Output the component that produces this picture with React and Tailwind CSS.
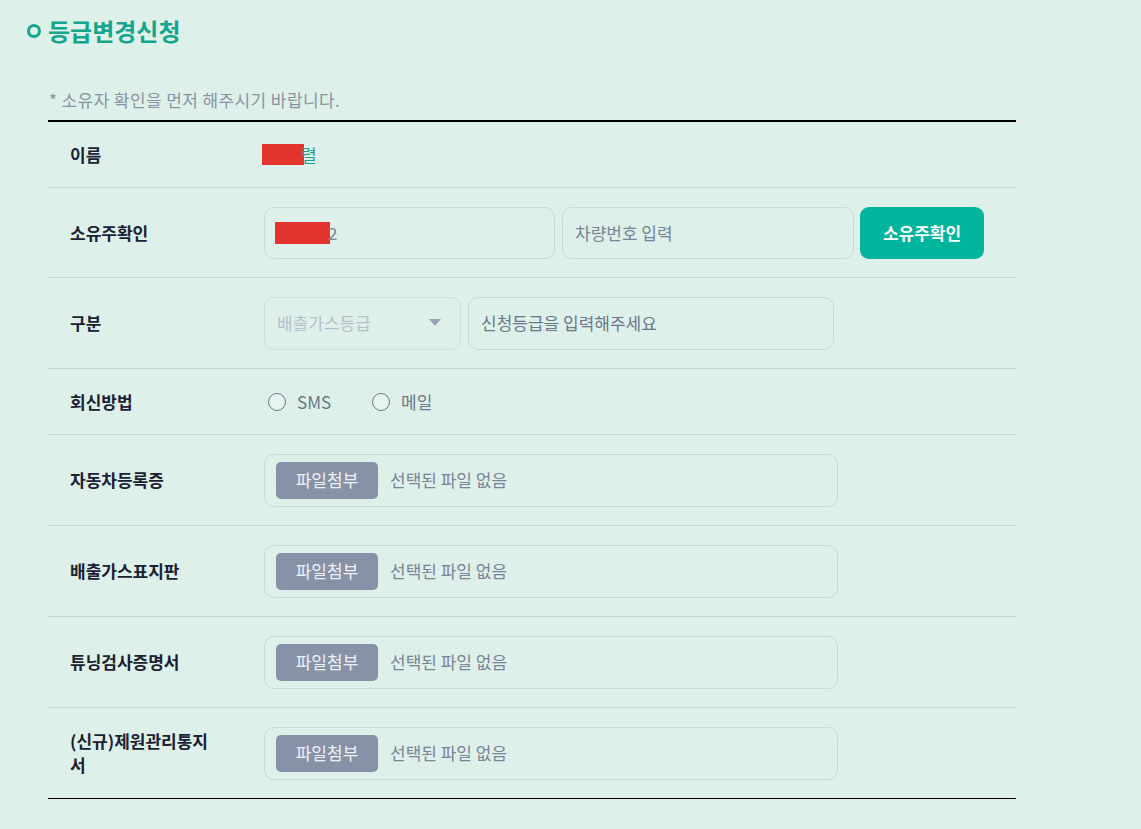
import { useState } from "react";

const font = { fontFamily: '"Noto Sans CJK KR", "Noto Sans", sans-serif' };

function Row({ label, children, tall = true, last = false }) {
  return (
    <div
      className={
        "flex items-center border-b " +
        (last ? "border-black " : "border-[#c8d4d2] ") +
        (tall ? "py-[18.5px]" : "py-[20.5px]")
      }
    >
      <div className="w-[216px] shrink-0 pl-[22px] pr-[50px] text-[17px] font-bold leading-[24px] text-[#1b2033]">
        {label}
      </div>
      <div className="flex h-full flex-1 items-center leading-[24px]">{children}</div>
    </div>
  );
}

function FileBox() {
  return (
    <div className="flex h-[53px] w-[574px] items-center rounded-[10px] border border-[#cdd6d8] px-[11px]">
      <span className="flex h-[37px] w-[102px] items-center justify-center rounded-[5px] bg-[#8791a8] text-[17px] text-[#eef1f5]">
        파일첨부
      </span>
      <span className="ml-[12px] text-[17px] text-[#7a8397]">선택된 파일 없음</span>
    </div>
  );
}

export default function App() {
  const [reply, setReply] = useState("");

  return (
    <div className="min-h-screen bg-[#ddf1ea] pt-[15px]" style={font}>
      <h1 className="flex items-center gap-[7px] pl-[27px] text-[24px] font-bold leading-[32px] text-[#14a58c]">
        <span className="h-[14px] w-[14px] rounded-full border-[3px] border-[#14a58c]" />
        등급변경신청
      </h1>

      <div className="ml-[48px] w-[968px]">
        <p className="mt-[41px] pb-[8px] pl-[1px] text-[17px] leading-[24px] tracking-[0.4px] text-[#8a93a4]">
          * 소유자 확인을 먼저 해주시기 바랍니다.
        </p>
        <div className="border-t-2 border-black">
          <Row label="이름" tall={false}>
            <span className="-ml-[2px] h-[21px] w-[42px] bg-[#e2332c]" />
            <span className="-ml-[3px] text-[17px] text-[#1aa08e]">렬</span>
          </Row>

          <Row label="소유주확인">
            <div className="flex h-[52px] w-[291px] items-center rounded-[10px] border border-[#cdd6d8] px-[10px]">
              <span className="h-[22px] w-[55px] bg-[#e2332c]" />
              <span className="-ml-[2px] text-[17px] text-[#7a8397]">2</span>
            </div>
            <div className="ml-[7px] flex h-[52px] w-[292px] items-center rounded-[10px] border border-[#cdd6d8] px-[12px] text-[17px] text-[#7a8397]">
              차량번호 입력
            </div>
            <button className="ml-[6px] h-[52px] w-[124px] rounded-[9px] bg-[#00b59b] text-[17px] font-bold text-white">
              소유주확인
            </button>
          </Row>

          <Row label="구분">
            <div className="flex h-[53px] w-[197px] items-center justify-between rounded-[10px] border border-[#d3dcdc] pl-[12px] pr-[19px] text-[17px] text-[#b7bfcb]">
              배출가스등급
              <svg width="12" height="8" viewBox="0 0 12 8">
                <path d="M0 0h12L6 7z" fill="#9aa2b1" />
              </svg>
            </div>
            <div className="ml-[7px] flex h-[53px] w-[366px] items-center rounded-[10px] border border-[#cdd6d8] px-[12px] text-[17px] text-[#6c7589]">
              신청등급을 입력해주세요
            </div>
          </Row>

          <Row label="회신방법" tall={false}>
            <label className="flex items-center text-[17px] text-[#6c7589]">
              <input
                type="radio"
                name="reply"
                checked={reply === "sms"}
                onChange={() => setReply("sms")}
                className="sr-only"
              />
              <span className="ml-[4px] h-[18px] w-[18px] rounded-full border border-[#6c7589] bg-white/30" />
              <span className="ml-[11px]">SMS</span>
            </label>
            <label className="ml-[41px] flex items-center text-[17px] text-[#6c7589]">
              <input
                type="radio"
                name="reply"
                checked={reply === "mail"}
                onChange={() => setReply("mail")}
                className="sr-only"
              />
              <span className="h-[18px] w-[18px] rounded-full border border-[#6c7589] bg-white/30" />
              <span className="ml-[11px]">메일</span>
            </label>
          </Row>

          <Row label="자동차등록증">
            <FileBox />
          </Row>
          <Row label="배출가스표지판">
            <FileBox />
          </Row>
          <Row label="튜닝검사증명서">
            <FileBox />
          </Row>
          <Row label="(신규)제원관리통지서" last>
            <FileBox />
          </Row>
        </div>
      </div>
    </div>
  );
}
